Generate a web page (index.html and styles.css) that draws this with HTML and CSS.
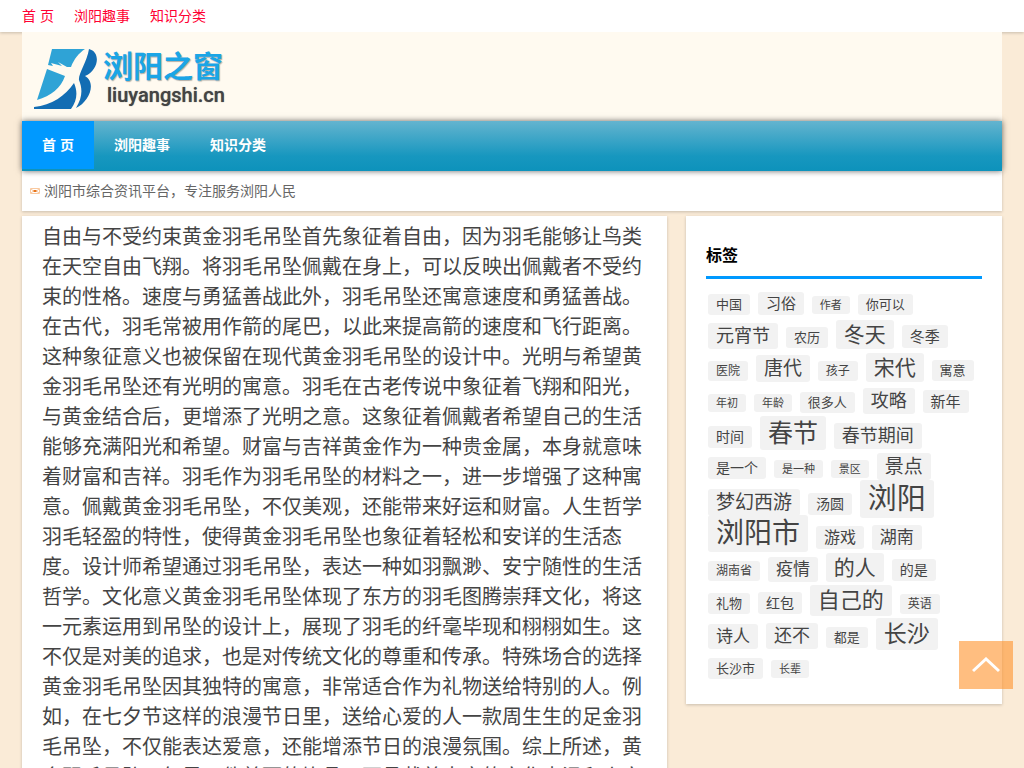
FILE: index.html
```html
<!DOCTYPE html>
<html lang="zh-CN">
<head>
<meta charset="utf-8">
<meta name="viewport" content="width=device-width, initial-scale=1">
<title>浏阳之窗</title>
<link rel="stylesheet" href="styles.css">
</head>
<body>
<nav class="topbar">
  <a href="#">首 页</a>
  <a href="#">浏阳趣事</a>
  <a href="#">知识分类</a>
</nav>
<div class="wrap">
  <header class="header">
    <a class="logo" href="#">
      <svg class="logo-mark" viewBox="0 0 64 62" aria-hidden="true">
        <path fill="#2fa3d6" d="M18 1H51C45 5 40 11 37 19L33 19L24 14L28 18L17 15L19 18L14 17ZM13 21L31 28C27 40 17 48 3 52Z"/>
        <path fill="#136db3" d="M55 1C67 4 65 22 51 28C63 35 55 54 42 60C48 50 49 42 45 32C44 26 53 14 55 1ZM40 35C44 44 43 53 37 61H0V59C18 57 31 48 40 35Z"/>
      </svg>
      <span class="logo-text">
        <span class="logo-name">浏阳之窗</span>
        <span class="logo-domain">liuyangshi.cn</span>
      </span>
    </a>
  </header>
  <nav class="mainnav">
    <a class="current" href="#">首 页</a>
    <a href="#">浏阳趣事</a>
    <a href="#">知识分类</a>
  </nav>
  <div class="notice">
    <svg class="mail" viewBox="0 0 10 8" aria-hidden="true">
      <path d="M.5 1.500h9v5h-9zM1 2l2.500 2L1 6M9 2L6.500 4L9 6" fill="none" stroke="#f9c9a0"/>
      <path d="M3.500 3h3v2h-3z" fill="#e8741a"/>
    </svg>
    <span>浏阳市综合资讯平台，专注服务浏阳人民</span>
  </div>
  <div class="columns">
    <main class="article">
      <p>自由与不受约束黄金羽毛吊坠首先象征着自由，因为羽毛能够让鸟类在天空自由飞翔。将羽毛吊坠佩戴在身上，可以反映出佩戴者不受约束的性格。速度与勇猛善战此外，羽毛吊坠还寓意速度和勇猛善战。在古代，羽毛常被用作箭的尾巴，以此来提高箭的速度和飞行距离。这种象征意义也被保留在现代黄金羽毛吊坠的设计中。光明与希望黄金羽毛吊坠还有光明的寓意。羽毛在古老传说中象征着飞翔和阳光，与黄金结合后，更增添了光明之意。这象征着佩戴者希望自己的生活能够充满阳光和希望。财富与吉祥黄金作为一种贵金属，本身就意味着财富和吉祥。羽毛作为羽毛吊坠的材料之一，进一步增强了这种寓意。佩戴黄金羽毛吊坠，不仅美观，还能带来好运和财富。人生哲学羽毛轻盈的特性，使得黄金羽毛吊坠也象征着轻松和安详的生活态度。设计师希望通过羽毛吊坠，表达一种如羽飘渺、安宁随性的生活哲学。文化意义黄金羽毛吊坠体现了东方的羽毛图腾崇拜文化，将这一元素运用到吊坠的设计上，展现了羽毛的纤毫毕现和栩栩如生。这不仅是对美的追求，也是对传统文化的尊重和传承。特殊场合的选择黄金羽毛吊坠因其独特的寓意，非常适合作为礼物送给特别的人。例如，在七夕节这样的浪漫节日里，送给心爱的人一款周生生的足金羽毛吊坠，不仅能表达爱意，还能增添节日的浪漫氛围。综上所述，黄金羽毛吊坠，每是一件美丽的饰品，更承载着丰富的文化内涵和人文</p>
    </main>
    <aside class="sidebar">
      <h2>标签</h2>
      <div class="tags">
        <a class="t13" href="#">中国</a>
        <a class="t15" href="#">习俗</a>
        <a class="t11" href="#">作者</a>
        <a class="t13" href="#">你可以</a>
        <a class="t18" href="#">元宵节</a>
        <a class="t13" href="#">农历</a>
        <a class="t21" href="#">冬天</a>
        <a class="t15" href="#">冬季</a>
        <a class="t12" href="#">医院</a>
        <a class="t19" href="#">唐代</a>
        <a class="t12" href="#">孩子</a>
        <a class="t21" href="#">宋代</a>
        <a class="t13" href="#">寓意</a>
        <a class="t11" href="#">年初</a>
        <a class="t11" href="#">年龄</a>
        <a class="t13" href="#">很多人</a>
        <a class="t18" href="#">攻略</a>
        <a class="t15" href="#">新年</a>
        <a class="t14" href="#">时间</a>
        <a class="t25" href="#">春节</a>
        <a class="t18" href="#">春节期间</a>
        <a class="t14" href="#">是一个</a>
        <a class="t11" href="#">是一种</a>
        <a class="t11" href="#">景区</a>
        <a class="t19" href="#">景点</a>
        <a class="t19" href="#">梦幻西游</a>
        <a class="t14" href="#">汤圆</a>
        <a class="t29" href="#">浏阳</a>
        <a class="t28" href="#">浏阳市</a>
        <a class="t16" href="#">游戏</a>
        <a class="t17" href="#">湖南</a>
        <a class="t12" href="#">湖南省</a>
        <a class="t17" href="#">疫情</a>
        <a class="t21" href="#">的人</a>
        <a class="t14" href="#">的是</a>
        <a class="t13" href="#">礼物</a>
        <a class="t14" href="#">红包</a>
        <a class="t22" href="#">自己的</a>
        <a class="t12" href="#">英语</a>
        <a class="t17" href="#">诗人</a>
        <a class="t18" href="#">还不</a>
        <a class="t13" href="#">都是</a>
        <a class="t23" href="#">长沙</a>
        <a class="t13" href="#">长沙市</a>
        <a class="t11" href="#">长辈</a>
      </div>
    </aside>
  </div>
</div>
<button class="totop" type="button" aria-label="返回顶部">
  <svg viewBox="0 0 28 16" aria-hidden="true"><path d="M1 14L14 2L27 14" fill="none" stroke="#fff" stroke-width="3"/></svg>
</button>
</body>
</html>
```
FILE: styles.css
```css
* {
  box-sizing: border-box;
}
body {
  margin: 0;
  background: #faebd7;
  color: #444;
  font: 14px/30px "Liberation Sans", "Noto Sans CJK SC", sans-serif;
}
a {
  color: inherit;
  text-decoration: none;
}
.topbar {
  position: relative;
  display: flex;
  gap: 20px;
  height: 32px;
  padding: 0 22px;
  background: #fff;
  color: #f03;
  line-height: 32px;
  box-shadow: 0 1px 3px rgba(0, 0, 0, .2);
}
.wrap {
  position: relative;
  max-width: 1200px;
  margin: 0 auto;
  padding: 0 22px;
}
.header {
  display: flex;
  padding: 16px 12px 10px;
  background: #fffaf0;
}
.logo {
  display: flex;
  gap: 5px;
  height: 63px;
}
.logo-mark {
  width: 64px;
  height: 62px;
}
.logo-text {
  display: flex;
  flex-direction: column;
}
.logo-name {
  color: #1ba5e6;
  font-size: 30px;
  font-weight: 700;
  line-height: 38px;
  text-shadow: 1px 1px 1px rgba(0, 0, 0, .3);
}
.logo-domain {
  padding-left: 4px;
  color: #444;
  font: 500 20px/18px Roboto, sans-serif;
  text-shadow: 0 0 1px #666;
}
.mainnav {
  position: relative;
  display: flex;
  height: 50px;
  background: linear-gradient(#64b4cf, #1797bf 70%, #0d92bb);
  color: #fff;
  font-weight: 700;
  line-height: 48px;
  box-shadow: 0 0 6px rgba(0, 0, 0, .6);
}
.mainnav a {
  height: 48px;
  padding: 0 20px;
}
.mainnav .current {
  background: #09f;
}
.notice {
  display: flex;
  align-items: center;
  gap: 4px;
  height: 40px;
  padding: 0 8px;
  background: #fff;
  color: #666;
  box-shadow: 0 1px 3px rgba(0, 0, 0, .2);
}
.mail {
  width: 10px;
  height: 8px;
}
.columns {
  display: flex;
  align-items: flex-start;
  gap: 19px;
  margin-top: 5px;
}
.article,
.sidebar {
  background: #fff;
  box-shadow: 0 1px 3px rgba(0, 0, 0, .2);
}
.article {
  flex: 1;
  padding: 6px 20px 20px;
  font-size: 20px;
}
.article p {
  margin: 0;
}
.sidebar {
  width: 316px;
  padding: 20px;
}
.sidebar h2 {
  margin: 0 0 10px;
  border-bottom: 3px solid #09f;
  color: #000;
  font-size: 16px;
  line-height: 40px;
}
.tags a {
  margin: 0 2px;
  padding: 3px 8px;
  border-radius: 3px;
  background: #f2f2f2;
  white-space: nowrap;
}
.t11 { font-size: 11px; }
.t12 { font-size: 12px; }
.t13 { font-size: 13px; }
.t14 { font-size: 14px; }
.t15 { font-size: 15px; }
.t16 { font-size: 16px; }
.t17 { font-size: 17px; }
.t18 { font-size: 18px; }
.t19 { font-size: 19px; }
.t21 { font-size: 21px; }
.t22 { font-size: 22px; }
.t23 { font-size: 23px; }
.t25 { font-size: 25px; }
.t28 { font-size: 28px; }
.t29 { font-size: 29px; }
.totop {
  position: fixed;
  right: 11px;
  bottom: 79px;
  display: grid;
  place-items: center;
  width: 54px;
  height: 48px;
  padding: 0;
  border: 0;
  background: rgba(255, 146, 43, .6);
}
.totop svg {
  width: 28px;
  height: 16px;
}
```
